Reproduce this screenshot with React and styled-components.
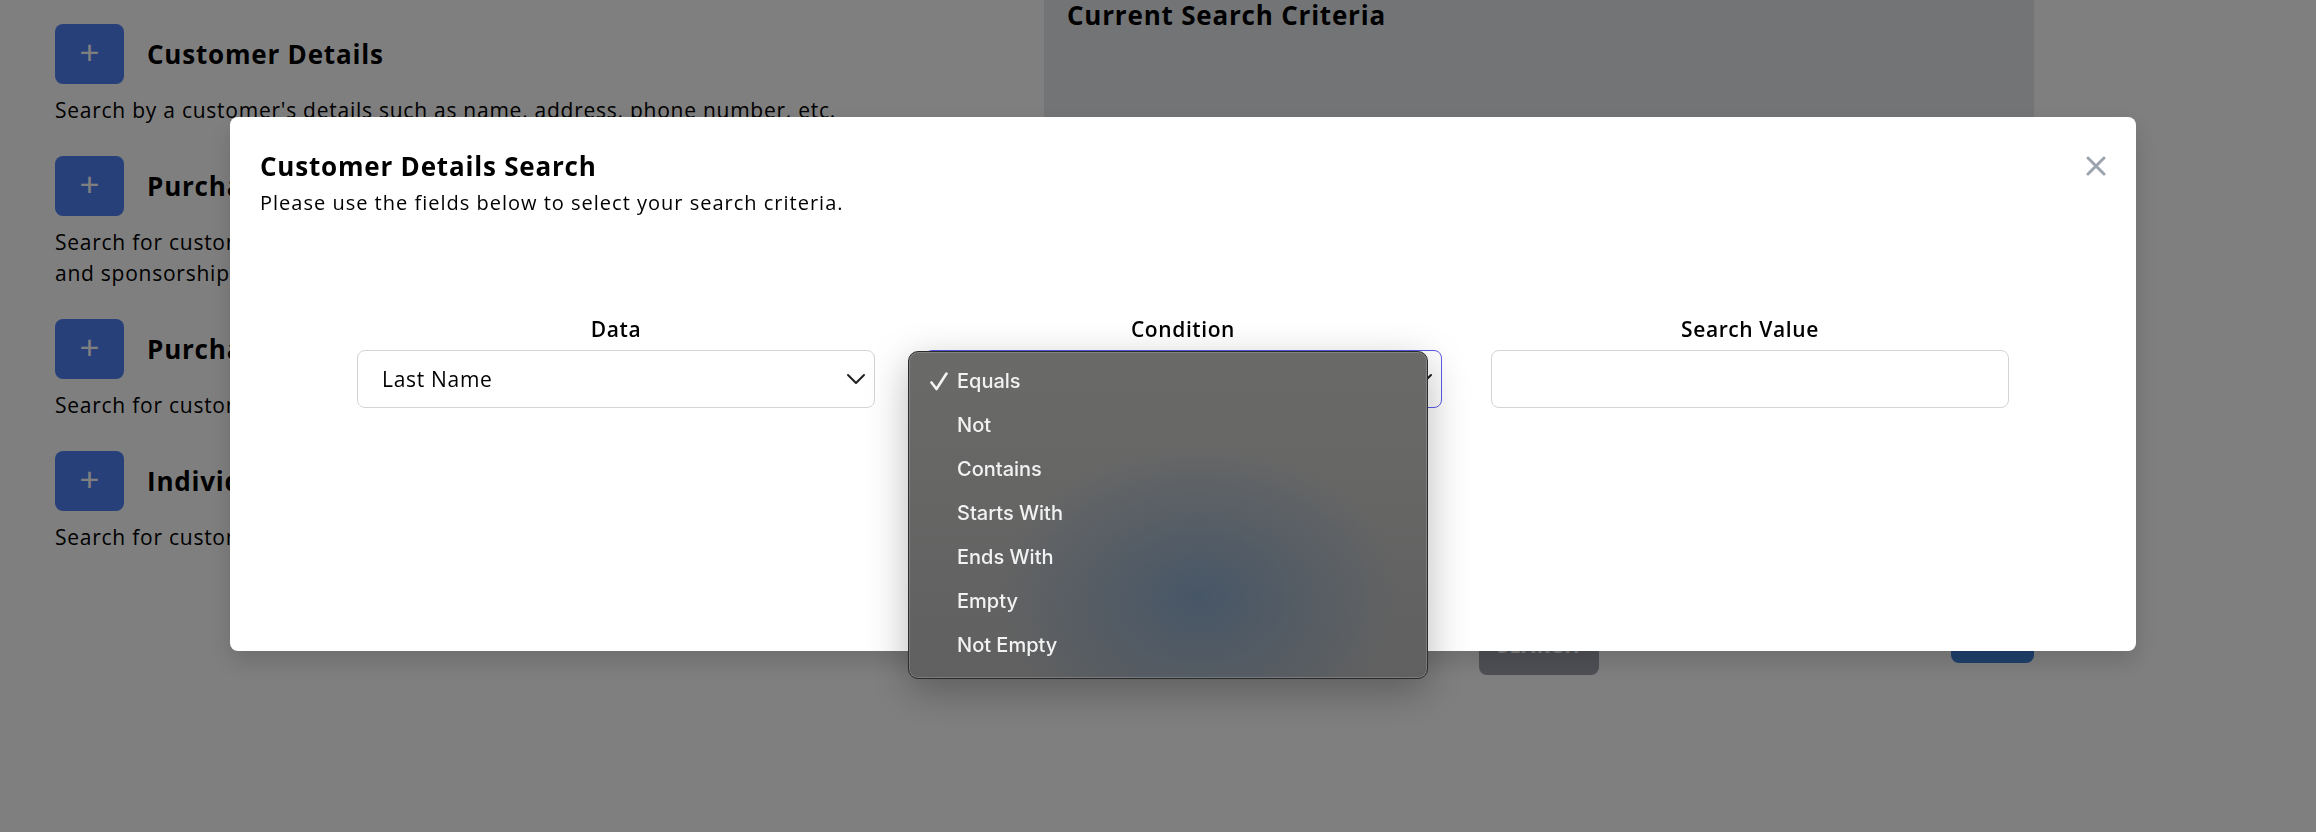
import React from 'react';
import styled, { createGlobalStyle } from 'styled-components';

const GlobalStyle = createGlobalStyle`
  html, body {
    margin: 0;
    padding: 0;
    background: #ffffff;
    font-family: "Open Sans", "Noto Sans", sans-serif;
    color: #000;
    overflow: hidden;
  }
`;

const Page = styled.div`
  display: grid;
  grid-template-columns: 945px 990px;
  column-gap: 44px;
  padding-left: 55px;
  width: 2316px;
  height: 832px;
  box-sizing: border-box;
`;

const LeftColumn = styled.div`
  display: flex;
  flex-direction: column;
  padding-top: 24px;
`;

const SearchType = styled.div`
  display: flex;
  flex-direction: column;
  gap: 11px;
  margin-bottom: 30px;
`;

const TypeHeader = styled.div`
  display: flex;
  align-items: center;
  gap: 23px;
`;

const PlusButton = styled.button`
  width: 69px;
  height: 60px;
  border: none;
  border-radius: 8px;
  background: #5080f4;
  color: #fff;
  font-size: 34px;
  font-weight: 400;
  line-height: 1;
  display: flex;
  align-items: center;
  justify-content: center;
  padding: 0 0 4px;
`;

const Heading = styled.h2`
  margin: ${(p) => (p.top ? '-3px 0 0' : '0')};
  font-size: 26px;
  font-weight: 700;
  letter-spacing: 0.8px;
  line-height: 36px;
`;

const Description = styled.p`
  margin: 0;
  font-size: 21px;
  letter-spacing: 0.75px;
  line-height: 31px;
`;

const RightColumn = styled.div`
  display: flex;
  flex-direction: column;
`;

const CriteriaPanel = styled.div`
  background: #e6e8ec;
  height: 590px;
  padding: 0 23px;
`;

const PanelActions = styled.div`
  display: flex;
  align-items: flex-start;
  padding-left: 435px;
  margin-top: 25px;
`;

const ActionButton = styled.button`
  border: none;
  border-radius: 8px;
  font-family: "Open Sans", sans-serif;
  font-size: 20px;
  font-weight: 700;
  letter-spacing: 1px;
  color: ${(p) => (p.primary ? '#fff' : '#f4f4f4')};
  background: ${(p) => (p.primary ? '#3e82d8' : '#9ea0aa')};
  width: ${(p) => p.width}px;
  height: ${(p) => p.height}px;
  margin-left: ${(p) => (p.primary ? 'auto' : '0')};
`;

const Backdrop = styled.div`
  position: fixed;
  inset: 0;
  background: rgba(0, 0, 0, 0.5);
  display: flex;
  align-items: flex-start;
  padding: 117px 0 0 230px;
`;

const Modal = styled.div`
  width: 1906px;
  height: 534px;
  box-sizing: border-box;
  background: #fff;
  border-radius: 8px;
  box-shadow: 0 10px 25px rgba(0, 0, 0, 0.15);
  padding: 31px 30px 0;
  display: flex;
  flex-direction: column;
`;

const ModalHeader = styled.div`
  display: flex;
  justify-content: space-between;
  align-items: flex-start;
`;

const ModalTitle = styled.h3`
  margin: 0;
  font-size: 26px;
  font-weight: 700;
  letter-spacing: 0.8px;
  line-height: 36px;
`;

const ModalSubtitle = styled.p`
  margin: 5px 0 0;
  font-size: 20px;
  letter-spacing: 1px;
  line-height: 28px;
`;

const CloseButton = styled.button`
  border: none;
  background: none;
  padding: 0;
  margin-top: 8px;
  width: 20px;
  height: 20px;
  display: flex;
`;

const FieldGrid = styled.div`
  display: grid;
  grid-template-columns: repeat(3, 518px);
  column-gap: 49px;
  padding: 0 97px;
  margin-top: 98px;
`;

const Field = styled.div`
  display: flex;
  flex-direction: column;
  align-items: stretch;
  gap: 7px;
  position: relative;
`;

const FieldLabel = styled.label`
  text-align: center;
  font-size: 21px;
  font-weight: 600;
  letter-spacing: 0.6px;
  line-height: 28px;
`;

const SelectBox = styled.div`
  height: 58px;
  box-sizing: border-box;
  border: 1px solid ${(p) => (p.focused ? '#5b5bea' : '#d4d4d8')};
  border-radius: 8px;
  display: flex;
  align-items: center;
  justify-content: space-between;
  padding: 0 7px 0 24px;
  font-size: 21px;
  letter-spacing: 0.7px;
`;

const TextInput = styled.input`
  height: 58px;
  box-sizing: border-box;
  border: 1px solid #d4d4d8;
  border-radius: 8px;
  padding: 0 24px;
  font-size: 20px;
  font-family: inherit;
  outline: none;
`;

const Menu = styled.ul`
  position: absolute;
  left: -16px;
  top: 36px;
  width: 520px;
  height: 328px;
  box-sizing: border-box;
  margin: 0;
  padding: 7px 0 0;
  list-style: none;
  border-radius: 10px;
  border: 1px solid #2b2b2b;
  box-shadow: inset 0 0 0 1px rgba(255, 255, 255, 0.18), 0 12px 40px rgba(0, 0, 0, 0.28);
  background:
    radial-gradient(ellipse 200px 150px at 290px 245px, rgba(62, 82, 104, 0.75), rgba(62, 82, 104, 0) 100%),
    linear-gradient(180deg, #6a6a69 0%, #606060 100%);
  font-family: Inter, "Liberation Sans", sans-serif;
`;

const MenuItem = styled.li`
  height: 44px;
  display: flex;
  align-items: center;
  gap: 8px;
  padding-left: 20px;
  color: #f2f2f2;
  font-size: 20px;
  font-weight: 500;
`;

const CheckSlot = styled.span`
  width: 20px;
  height: 20px;
  display: flex;
  align-items: center;
`;

const Chevron = ({ color = '#1f1f1f' }) => (
  <svg width="22" height="12" viewBox="0 0 22 12" fill="none">
    <path d="M3 2 L11 10 L19 2" stroke={color} strokeWidth="2" strokeLinecap="round" strokeLinejoin="round" />
  </svg>
);

const conditions = ['Equals', 'Not', 'Contains', 'Starts With', 'Ends With', 'Empty', 'Not Empty'];

const searchTypes = [
  {
    title: 'Customer Details',
    text: "Search by a customer's details such as name, address, phone number, etc.",
  },
  {
    title: 'Purchase History',
    text: (
      <>
        Search for customers by the tickets, memberships, donations, gift cards
        <br />
        and sponsorships they have purchased.
      </>
    ),
  },
  {
    title: 'Purchased Items',
    text: 'Search for customers by a specific item, event or performance.',
  },
  {
    title: 'Individual Attributes',
    text: 'Search for customers by their custom attributes and tags.',
  },
];

export default function App() {
  return (
    <>
      <GlobalStyle />
      <Page>
        <LeftColumn>
          {searchTypes.map((type) => (
            <SearchType key={type.title}>
              <TypeHeader>
                <PlusButton>+</PlusButton>
                <Heading>{type.title}</Heading>
              </TypeHeader>
              <Description>{type.text}</Description>
            </SearchType>
          ))}
        </LeftColumn>
        <RightColumn>
          <CriteriaPanel>
            <Heading top>Current Search Criteria</Heading>
          </CriteriaPanel>
          <PanelActions>
            <ActionButton width={120} height={60}>SEARCH</ActionButton>
            <ActionButton primary width={83} height={48}>RESET</ActionButton>
          </PanelActions>
        </RightColumn>
      </Page>

      <Backdrop>
        <Modal>
          <ModalHeader>
            <div>
              <ModalTitle>Customer Details Search</ModalTitle>
              <ModalSubtitle>Please use the fields below to select your search criteria.</ModalSubtitle>
            </div>
            <CloseButton aria-label="Close">
              <svg width="20" height="20" viewBox="0 0 20 20">
                <path d="M2 2 L18 18 M18 2 L2 18" stroke="#9ca3af" strokeWidth="3" strokeLinecap="round" />
              </svg>
            </CloseButton>
          </ModalHeader>

          <FieldGrid>
            <Field>
              <FieldLabel>Data</FieldLabel>
              <SelectBox>
                <span>Last Name</span>
                <Chevron />
              </SelectBox>
            </Field>
            <Field>
              <FieldLabel>Condition</FieldLabel>
              <SelectBox focused>
                <span>Equals</span>
                <Chevron />
              </SelectBox>
              <Menu>
                {conditions.map((c, i) => (
                  <MenuItem key={c}>
                    <CheckSlot>
                      {i === 0 && (
                        <svg width="20" height="19" viewBox="0 0 20 19">
                          <path d="M2.5 10.5 L7.5 17 L17.5 1.5" stroke="#f4f4f4" strokeWidth="2.6" fill="none" strokeLinecap="round" strokeLinejoin="round" />
                        </svg>
                      )}
                    </CheckSlot>
                    {c}
                  </MenuItem>
                ))}
              </Menu>
            </Field>
            <Field>
              <FieldLabel>Search Value</FieldLabel>
              <TextInput type="text" />
            </Field>
          </FieldGrid>
        </Modal>
      </Backdrop>
    </>
  );
}
